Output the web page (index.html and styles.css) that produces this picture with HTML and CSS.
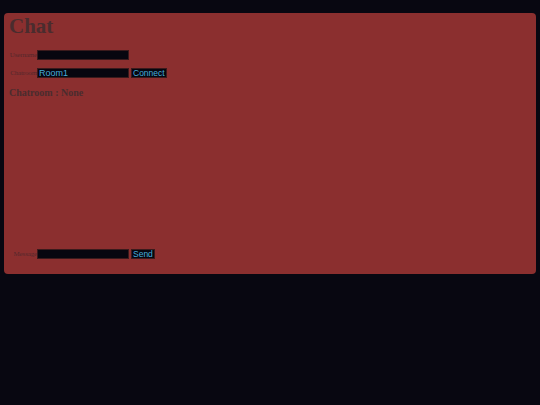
FILE: index.html
```html
<!DOCTYPE html>
<html>
<head>
<meta charset="utf-8">
<link rel="stylesheet" href="styles.css">
</head>
<body>
<div class="panel">
  <h1 class="title">Chat</h1>
  <div class="row row-user">
    <label class="lbl">Username</label>
    <span class="field"></span>
  </div>
  <div class="row row-room">
    <label class="lbl">Chatroom</label>
    <span class="field">Room1</span>
    <span class="btn">Connect</span>
  </div>
  <div class="status">Chatroom : None</div>
  <div class="messages"></div>
  <div class="row row-msg">
    <label class="lbl">Message</label>
    <span class="field"></span>
    <span class="btn">Send</span>
  </div>
</div>
</body>
</html>
```
FILE: styles.css
```css
html, body {
  margin: 0;
  padding: 0;
  background: #080711;
  width: 540px;
  height: 405px;
  overflow: hidden;
}
.panel {
  margin: 13px 4px 0 4px;
  height: 261px;
  box-sizing: border-box;
  background: #8b2f2f;
  border-radius: 4px;
  padding: 0 5px;
  display: flex;
  flex-direction: column;
  font-family: "Liberation Serif", serif;
}
.title {
  margin: 1px 0 0 0;
  font-size: 21px;
  line-height: 24px;
  font-weight: bold;
  color: #4a2c2e;
}
.row {
  display: flex;
  align-items: center;
  height: 10px;
}
.row-user { margin-top: 12px; }
.row-room { margin-top: 8px; }
.row-msg { margin-top: auto; margin-bottom: 15px; }
.lbl {
  width: 28px;
  text-align: right;
  font-size: 7px;
  color: #55282c;
  white-space: nowrap;
  letter-spacing: -0.15px;
}
.field {
  width: 92px;
  height: 10px;
  box-sizing: border-box;
  background: #07060f;
  border: 1px solid #3a1a1c;
  color: #45acdb;
  font-family: "Liberation Sans", sans-serif;
  font-size: 9px;
  line-height: 8px;
  padding-left: 1px;
}
.btn {
  margin-left: 2px;
  height: 10px;
  box-sizing: border-box;
  background: #07060f;
  border: 1px solid #3a1a1c;
  color: #45acdb;
  font-family: "Liberation Sans", sans-serif;
  font-size: 8.5px;
  line-height: 8px;
  padding: 0 1px;
}
.status {
  margin-top: 9px;
  font-size: 10px;
  font-weight: bold;
  color: #4a2c2e;
  line-height: 12px;
}
.messages {
  flex: 1;
}
```
